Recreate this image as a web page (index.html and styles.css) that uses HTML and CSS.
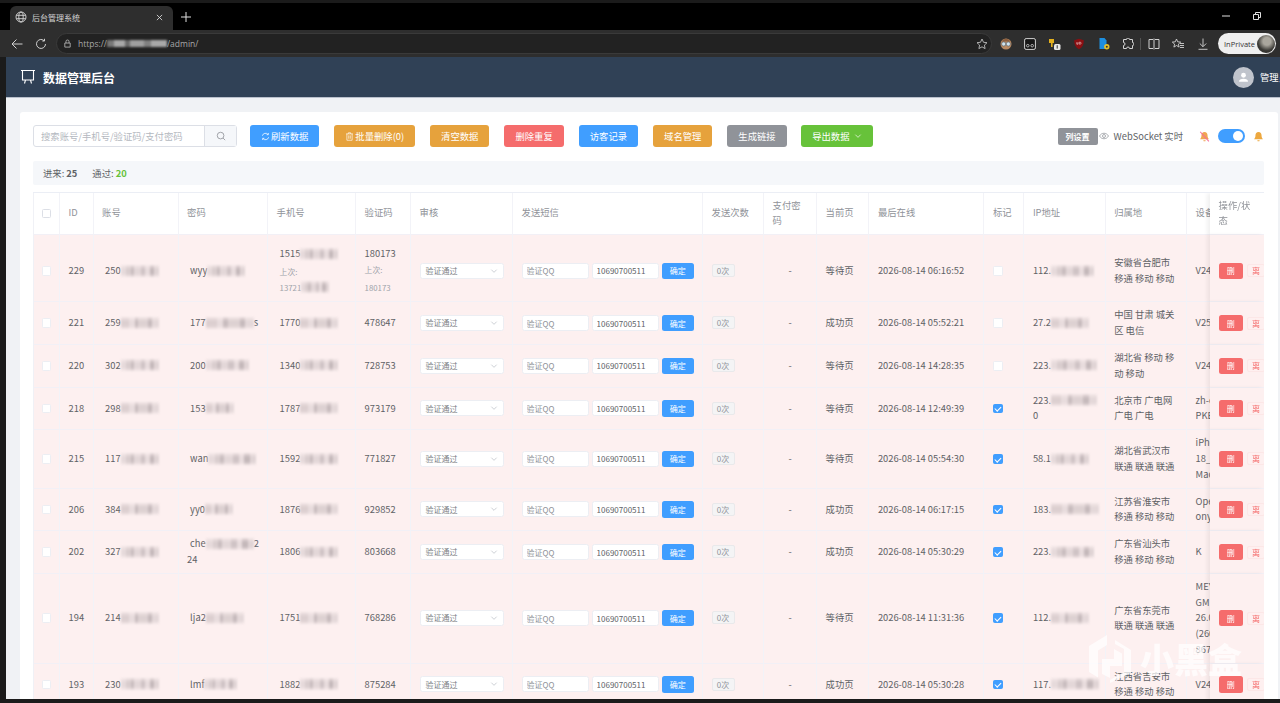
FILE: index.html
```html
<!DOCTYPE html>
<html lang="zh-CN">
<head>
  <meta charset="UTF-8" />
  <meta name="viewport" content="width=device-width, initial-scale=1.0"/>
  <title>后台管理系统</title>
  <link rel="stylesheet" href="styles.css">
</head>
<body>

  <!-- shared icons -->
  <svg class="defs" aria-hidden="true">
    <symbol id="i-down" viewBox="0 0 12 12"><path d="M2 4l4 4 4-4" fill="none" stroke="currentColor" stroke-width="1"/></symbol>
    <symbol id="i-bell" viewBox="0 0 12 12"><path d="M6 1c-2.2 0-3.3 1.700-3.300 3.600 0 2.400-.9 3.400-1.500 4.400h9.600c-.6-1-1.500-2-1.500-4.400C9.300 2.700 8.200 1 6 1zM4.700 10a1.300 1.300 0 0 0 2.600 0z" fill="currentColor"/></symbol>
  </svg>

  <!-- Browser frame -->
  <div class="tabstrip">
    <div class="tab">
      <svg class="tab-globe" viewBox="0 0 12 12"><g fill="none" stroke="#d6d6d6" stroke-width=".9"><circle cx="6" cy="6" r="5"/><ellipse cx="6" cy="6" rx="2.200" ry="5"/><path d="M1.300 4.300h9.400M1.300 7.700h9.400"/></g></svg>
      <span class="tab-title">后台管理系统</span>
      <svg class="tab-close" viewBox="0 0 8 8"><path d="M1 1l6 6M7 1L1 7" stroke="#d8d8d8" stroke-width="1"/></svg>
    </div>
    <svg class="tab-new" viewBox="0 0 10 10"><path d="M5 0v10M0 5h10" stroke="#e0e0e0" stroke-width="1"/></svg>
    <div class="win-btns">
      <svg class="win-min" viewBox="0 0 8 8"><path d="M0 4h8" stroke="#e0e0e0" stroke-width="1"/></svg>
      <svg class="win-max" viewBox="0 0 8 8"><path d="M.5 2.500h5v5h-5zM2.500 2.500v-2h5v5h-2" fill="none" stroke="#e0e0e0" stroke-width="1"/></svg>
    </div>
  </div>

  <div class="navbar">
    <svg class="nav-ico" viewBox="0 0 12 12"><path d="M11.500 6H1M5.500 1.500L1 6l4.500 4.500" fill="none" stroke="#cfcfcf" stroke-width="1"/></svg>
    <svg class="nav-ico nav-reload" viewBox="0 0 12 12"><path d="M10.500 6a4.500 4.500 0 1 1-1.400-3.300M9.500 .8v2.200H7.300" fill="none" stroke="#cfcfcf" stroke-width="1"/></svg>
    <div class="address">
      <svg class="lock" viewBox="0 0 10 10"><path d="M2 4.500h6v4.500H2zM3.300 4.500V2.800a1.700 1.700 0 0 1 3.400 0v1.700" fill="none" stroke="#bdbdbd" stroke-width=".9"/></svg>
      <span class="url">https://</span><span class="url-mosaic"></span><span class="url">/admin/</span>
      <svg class="addr-star" viewBox="0 0 12 12"><path d="M6 1l1.500 3.300 3.500.4-2.600 2.400.7 3.500L6 8.800l-3.100 1.800.7-3.500L1 4.700l3.500-.4z" fill="none" stroke="#bdbdbd" stroke-width=".9"/></svg>
    </div>
    <div class="ext-icons">
      <svg class="ext" viewBox="0 0 12 12"><circle cx="6" cy="6" r="5.500" fill="#b98a62"/><path d="M1.500 3.500a5 5 0 0 1 9 0z" fill="#8c5f3f"/><circle cx="3.700" cy="6" r="2.100" fill="#cfe3ee" stroke="#50606c" stroke-width=".6"/><circle cx="8.300" cy="6" r="2.100" fill="#cfe3ee" stroke="#50606c" stroke-width=".6"/></svg>
      <svg class="ext" viewBox="0 0 12 12"><rect x=".6" y=".6" width="10.800" height="10.800" rx="1.500" fill="#161616" stroke="#e6e6e6" stroke-width=".9"/><circle cx="3.800" cy="7.700" r="1.300" fill="none" stroke="#e6e6e6" stroke-width=".7"/><circle cx="8.200" cy="7.700" r="1.300" fill="none" stroke="#e6e6e6" stroke-width=".7"/></svg>
      <svg class="ext" viewBox="0 0 12 12"><path d="M0 1h5v4H3.600v4H2V5H0z" fill="#e3b01d"/><rect x="5" y="6" width="6.500" height="6" rx="1.500" fill="#e8e8e8"/><path d="M8.200 7.200v3.400" stroke="#333" stroke-width="1"/></svg>
      <svg class="ext" viewBox="0 0 12 12"><path d="M6 .8l4.800 1.400c0 4.300-1.300 7.300-4.800 9-3.500-1.700-4.800-4.700-4.800-9z" fill="#8a0f12"/><path d="M3.800 4.200v2h1.200v-2M6.300 4.200v2h.8a1 1 0 0 0 0-2z" fill="none" stroke="#f2d0d0" stroke-width=".6"/></svg>
      <svg class="ext" viewBox="0 0 12 12"><path d="M1.500 0h5l2 2.500V11h-7z" fill="#1d8fe0"/><circle cx="8.800" cy="8.800" r="2.700" fill="#e6c229"/><circle cx="8.800" cy="8.800" r="1" fill="#333"/></svg>
      <svg class="ext" viewBox="0 0 12 12"><path d="M4.500 1.500a1.500 1.500 0 0 1 3 0h3v3a1.500 1.500 0 0 1 0 3v3h-3a1.500 1.500 0 0 0-3 0h-3v-3a1.500 1.500 0 0 0 0-3v-3z" fill="none" stroke="#d2d2d2" stroke-width="1"/></svg>
      <span class="ext-sep"></span>
      <svg class="ext" viewBox="0 0 12 12"><path d="M5 1.500H1v9h4M7 1.500h4v9H7M6 .5v11" fill="none" stroke="#d2d2d2" stroke-width="1"/></svg>
      <svg class="ext" viewBox="0 0 12 12"><path d="M4.500 1l1.200 2.800 3 .3-2.300 2 .7 3-2.600-1.600L1.900 9.100l.7-3-2.300-2 3-.3zM8 5.500h4M8 7.500h4M8 9.500h4" fill="none" stroke="#d2d2d2" stroke-width=".9"/></svg>
      <svg class="ext" viewBox="0 0 12 12"><path d="M6 .5v8M2.800 5.500L6 8.700l3.200-3.200M1.500 11.300h9" fill="none" stroke="#d2d2d2" stroke-width=".9"/></svg>
    </div>
    <div class="inprivate">
      <span>InPrivate</span>
      <span class="inprivate-pic"></span>
    </div>
  </div>

  <!-- Page -->
  <div class="viewport">
    <div class="header">
      <svg class="logo" viewBox="0 0 16 16"><path d="M1 1.500h14M2.500 1.500v9.500h11V1.500M5.500 11l-1 3.500M10.500 11l1 3.500" fill="none" stroke="#fff" stroke-width="1.100"/></svg>
      <h1>数据管理后台</h1>
      <div class="user">
        <span class="avatar">
          <svg viewBox="0 0 20 20"><circle cx="10" cy="7" r="3.200" fill="#fff"/><path d="M4 15.500c0-2.500 2.500-3.700 6-3.700s6 1.200 6 3.700z" fill="#fff"/></svg>
        </span>
        <span class="user-name">管理员</span>
      </div>
    </div>

    <main>
      <div class="card">

        <div class="toolbar">
          <div class="search">
            <input type="text" placeholder="搜索账号/手机号/验证码/支付密码">
            <span class="search-btn">
              <svg viewBox="0 0 12 12"><circle cx="5.500" cy="5.500" r="4" fill="none" stroke="#909399" stroke-width="1"/><path d="M8.500 8.500l2.500 2.500" stroke="#909399" stroke-width="1"/></svg>
            </span>
          </div>
          <button class="btn btn-primary">
            <svg class="btn-ico" viewBox="0 0 12 12"><path d="M1.800 5a4.300 4.300 0 0 1 7.600-1.600M10.200 7a4.300 4.300 0 0 1-7.600 1.600M9.800 1.300v2.300H7.500M2.200 10.700V8.400h2.300" fill="none" stroke="#fff" stroke-width="1"/></svg>刷新数据
          </button>
          <button class="btn btn-warning">
            <svg class="btn-ico" viewBox="0 0 12 12"><path d="M1.500 2.500h9M4.500 2.500V1h3v1.500M2.500 2.500V11h7V2.500M5 4.500v4.500M7 4.500v4.500" fill="none" stroke="#fff" stroke-width=".9"/></svg>批量删除(0)
          </button>
          <button class="btn btn-warning">清空数据</button>
          <button class="btn btn-danger">删除重复</button>
          <button class="btn btn-primary">访客记录</button>
          <button class="btn btn-warning">域名管理</button>
          <button class="btn btn-info">生成链接</button>
          <button class="btn btn-success">导出数据<svg class="btn-arrow"><use href="#i-down"/></svg></button>

          <div class="toolbar-right">
            <button class="btn-columns">列设置</button>
            <svg class="eye" viewBox="0 0 12 12"><path d="M.6 6C2 3.700 3.800 2.700 6 2.700S10 3.700 11.400 6C10 8.300 8.200 9.300 6 9.300S2 8.300.6 6z" fill="none" stroke="#909399" stroke-width=".9"/><circle cx="6" cy="6" r="1.800" fill="none" stroke="#909399" stroke-width=".9"/></svg>
            <span class="ws-label">WebSocket 实时</span>
            <span class="bell-off">
              <svg><use href="#i-bell"/></svg>
            </span>
            <span class="switch"></span>
            <svg class="bell-on"><use href="#i-bell"/></svg>
          </div>
        </div>

        <div class="stats">
          <span>进来: <b>25</b></span>
          <span>通过: <b class="green">20</b></span>
        </div>

        <div class="table-wrap">
          <table class="data-table">
            <colgroup>
              <col class="c-check"><col class="c-id"><col class="c-account"><col class="c-pwd"><col class="c-phone"><col class="c-code"><col class="c-audit"><col class="c-sms"><col class="c-count"><col class="c-pay"><col class="c-page"><col class="c-time"><col class="c-mark"><col class="c-ip"><col class="c-area"><col class="c-device"><col class="c-ops">
            </colgroup>
            <thead>
              <tr>
                <th><span class="check"></span></th>
                <th>ID</th><th>账号</th><th>密码</th><th>手机号</th><th>验证码</th><th>审核</th><th>发送短信</th><th>发送次数</th><th>支付密码</th><th>当前页</th><th>最后在线</th><th>标记</th><th>IP地址</th><th>归属地</th><th>设备</th>
                <th class="fixed">操作/状态</th>
              </tr>
            </thead>
            <tbody>
              <tr class="row-first">
                <td><span class="check"></span></td>
                <td>229</td>
                <td><span class="val">250<i class="mosaic m38"></i></span></td>
                <td><span class="val">wyy<i class="mosaic m38"></i></span></td>
                <td><span class="val">1515<i class="mosaic m38"></i></span><span class="sub val">上次:</span><span class="sub val">13721<i class="mosaic m28"></i></span></td>
                <td>180173<span class="sub">上次:</span><span class="sub">180173</span></td>
                <td><div class="select">验证通过<svg><use href="#i-down"/></svg></div></td>
                <td><div class="sms"><input type="text" placeholder="验证QQ"><input type="text" value="10690700511"><button class="btn-ok">确定</button></div></td>
                <td><span class="tag-count">0次</span></td>
                <td class="center">-</td>
                <td>等待页</td>
                <td>2026-08-14 06:16:52</td>
                <td><span class="check"></span></td>
                <td class="ip">112.<i class="mosaic m43"></i></td>
                <td>安徽省合肥市 移通 移动 移动</td>
                <td>V24</td>
                <td class="fixed"><div class="ops"><button class="btn-del">删</button><span class="tag-off">离</span></div></td>
              </tr>
              <tr>
                <td><span class="check"></span></td>
                <td>221</td>
                <td><span class="val">259<i class="mosaic m38"></i></span></td>
                <td><span class="val">177<i class="mosaic m48"></i>s</span></td>
                <td><span class="val">1770<i class="mosaic m38"></i></span></td>
                <td>478647</td>
                <td><div class="select">验证通过<svg><use href="#i-down"/></svg></div></td>
                <td><div class="sms"><input type="text" placeholder="验证QQ"><input type="text" value="10690700511"><button class="btn-ok">确定</button></div></td>
                <td><span class="tag-count">0次</span></td>
                <td class="center">-</td>
                <td>成功页</td>
                <td>2026-08-14 05:52:21</td>
                <td><span class="check"></span></td>
                <td class="ip">27.2<i class="mosaic m38"></i></td>
                <td>中国 甘肃 城关区 电信</td>
                <td>V25</td>
                <td class="fixed"><div class="ops"><button class="btn-del">删</button><span class="tag-off">离</span></div></td>
              </tr>
              <tr>
                <td><span class="check"></span></td>
                <td>220</td>
                <td><span class="val">302<i class="mosaic m38"></i></span></td>
                <td><span class="val">200<i class="mosaic m43"></i></span></td>
                <td><span class="val">1340<i class="mosaic m38"></i></span></td>
                <td>728753</td>
                <td><div class="select">验证通过<svg><use href="#i-down"/></svg></div></td>
                <td><div class="sms"><input type="text" placeholder="验证QQ"><input type="text" value="10690700511"><button class="btn-ok">确定</button></div></td>
                <td><span class="tag-count">0次</span></td>
                <td class="center">-</td>
                <td>等待页</td>
                <td>2026-08-14 14:28:35</td>
                <td><span class="check"></span></td>
                <td class="ip">223.<i class="mosaic m46"></i></td>
                <td>湖北省 移动 移动 移动</td>
                <td>V24</td>
                <td class="fixed"><div class="ops"><button class="btn-del">删</button><span class="tag-off">离</span></div></td>
              </tr>
              <tr>
                <td><span class="check"></span></td>
                <td>218</td>
                <td><span class="val">298<i class="mosaic m38"></i></span></td>
                <td><span class="val">153<i class="mosaic m28"></i></span></td>
                <td><span class="val">1787<i class="mosaic m38"></i></span></td>
                <td>973179</td>
                <td><div class="select">验证通过<svg><use href="#i-down"/></svg></div></td>
                <td><div class="sms"><input type="text" placeholder="验证QQ"><input type="text" value="10690700511"><button class="btn-ok">确定</button></div></td>
                <td><span class="tag-count">0次</span></td>
                <td class="center">-</td>
                <td>等待页</td>
                <td>2026-08-14 12:49:39</td>
                <td><span class="check on"></span></td>
                <td class="ip">223.<i class="mosaic m46"></i><br>0</td>
                <td>北京市 广电网 广电 广电</td>
                <td>zh-cn<br>PKE</td>
                <td class="fixed"><div class="ops"><button class="btn-del">删</button><span class="tag-off">离</span></div></td>
              </tr>
              <tr>
                <td><span class="check"></span></td>
                <td>215</td>
                <td><span class="val">117<i class="mosaic m38"></i></span></td>
                <td><span class="val">wan<i class="mosaic m48"></i></span></td>
                <td><span class="val">1592<i class="mosaic m38"></i></span></td>
                <td>771827</td>
                <td><div class="select">验证通过<svg><use href="#i-down"/></svg></div></td>
                <td><div class="sms"><input type="text" placeholder="验证QQ"><input type="text" value="10690700511"><button class="btn-ok">确定</button></div></td>
                <td><span class="tag-count">0次</span></td>
                <td class="center">-</td>
                <td>等待页</td>
                <td>2026-08-14 05:54:30</td>
                <td><span class="check on"></span></td>
                <td class="ip">58.1<i class="mosaic m38"></i></td>
                <td>湖北省武汉市 联通 联通 联通</td>
                <td>iPhone<br>18_5<br>Mac</td>
                <td class="fixed"><div class="ops"><button class="btn-del">删</button><span class="tag-off">离</span></div></td>
              </tr>
              <tr>
                <td><span class="check"></span></td>
                <td>206</td>
                <td><span class="val">384<i class="mosaic m38"></i></span></td>
                <td><span class="val">yy0<i class="mosaic m28"></i></span></td>
                <td><span class="val">1876<i class="mosaic m38"></i></span></td>
                <td>929852</td>
                <td><div class="select">验证通过<svg><use href="#i-down"/></svg></div></td>
                <td><div class="sms"><input type="text" placeholder="验证QQ"><input type="text" value="10690700511"><button class="btn-ok">确定</button></div></td>
                <td><span class="tag-count">0次</span></td>
                <td class="center">-</td>
                <td>成功页</td>
                <td>2026-08-14 06:17:15</td>
                <td><span class="check on"></span></td>
                <td class="ip">183.<i class="mosaic m48"></i></td>
                <td>江苏省淮安市 移通 移动 移动</td>
                <td>Open<br>ony</td>
                <td class="fixed"><div class="ops"><button class="btn-del">删</button><span class="tag-off">离</span></div></td>
              </tr>
              <tr>
                <td><span class="check"></span></td>
                <td>202</td>
                <td><span class="val">327<i class="mosaic m38"></i></span></td>
                <td><span class="val">che<i class="mosaic m48"></i>2<br>24</span></td>
                <td><span class="val">1806<i class="mosaic m38"></i></span></td>
                <td>803668</td>
                <td><div class="select">验证通过<svg><use href="#i-down"/></svg></div></td>
                <td><div class="sms"><input type="text" placeholder="验证QQ"><input type="text" value="10690700511"><button class="btn-ok">确定</button></div></td>
                <td><span class="tag-count">0次</span></td>
                <td class="center">-</td>
                <td>成功页</td>
                <td>2026-08-14 05:30:29</td>
                <td><span class="check on"></span></td>
                <td class="ip">223.<i class="mosaic m43"></i></td>
                <td>广东省汕头市 移通 移动 移动</td>
                <td>K</td>
                <td class="fixed"><div class="ops"><button class="btn-del">删</button><span class="tag-off">离</span></div></td>
              </tr>
              <tr>
                <td><span class="check"></span></td>
                <td>194</td>
                <td><span class="val">214<i class="mosaic m38"></i></span></td>
                <td><span class="val">lja2<i class="mosaic m38"></i></span></td>
                <td><span class="val">1751<i class="mosaic m38"></i></span></td>
                <td>768286</td>
                <td><div class="select">验证通过<svg><use href="#i-down"/></svg></div></td>
                <td><div class="sms"><input type="text" placeholder="验证QQ"><input type="text" value="10690700511"><button class="btn-ok">确定</button></div></td>
                <td><span class="tag-count">0次</span></td>
                <td class="center">-</td>
                <td>等待页</td>
                <td>2026-08-14 11:31:36</td>
                <td><span class="check on"></span></td>
                <td class="ip">112.<i class="mosaic m38"></i></td>
                <td>广东省东莞市 联通 联通 联通</td>
                <td>MEY<br>GM<br>26.0<br>(260<br>867</td>
                <td class="fixed"><div class="ops"><button class="btn-del">删</button><span class="tag-off">离</span></div></td>
              </tr>
              <tr>
                <td><span class="check"></span></td>
                <td>193</td>
                <td><span class="val">230<i class="mosaic m38"></i></span></td>
                <td><span class="val">lmf<i class="mosaic m33"></i></span></td>
                <td><span class="val">1882<i class="mosaic m38"></i></span></td>
                <td>875284</td>
                <td><div class="select">验证通过<svg><use href="#i-down"/></svg></div></td>
                <td><div class="sms"><input type="text" placeholder="验证QQ"><input type="text" value="10690700511"><button class="btn-ok">确定</button></div></td>
                <td><span class="tag-count">0次</span></td>
                <td class="center">-</td>
                <td>成功页</td>
                <td>2026-08-14 05:30:28</td>
                <td><span class="check on"></span></td>
                <td class="ip">117.<i class="mosaic m48"></i></td>
                <td>江西省吉安市 移通 移动 移动</td>
                <td>V24</td>
                <td class="fixed"><div class="ops"><button class="btn-del">删</button><span class="tag-off">离</span></div></td>
              </tr>
            </tbody>
          </table>
        </div>

      </div>
    </main>

    <!-- site watermark on the screenshot -->
    <div class="watermark">
      <svg viewBox="0 0 42 48"><path d="M18 0L0 11v26l9 5.500V15.500L18 10zM13 24h12V14l8 4.500V31H21v12l-8-4zM26 5l16 10v23L21 48v-3l14-8V14L26 9z" fill="currentColor"/></svg>
      <span>小黑盒</span>
    </div>
  </div>

</body>
</html>
```

FILE: styles.css
```css
* {
  box-sizing: border-box;
}

html, body {
  height: 100%;
}

body {
  margin: 0;
  display: flex;
  flex-direction: column;
  height: 703px;
  overflow: hidden;
  background: #1b1b1b;
  font-family: "Noto Sans CJK SC", "Noto Sans", sans-serif;
  font-size: 9.33px;
  color: #606266;
}

.defs {
  position: absolute;
  width: 0;
  height: 0;
}

input, button {
  font-family: inherit;
}

/* Browser frame */
.tabstrip {
  display: flex;
  align-items: flex-end;
  height: 27px;
  margin-top: 3px;
  flex-shrink: 0;
  padding-left: 10px;
  background: #000;
}

.tab {
  position: relative;
  display: flex;
  align-items: center;
  width: 163px;
  height: 24px;
  padding: 0 7px 2px 5px;
  background: #2e2e2e;
  border-radius: 6px 6px 0 0;
}

.tab-globe {
  width: 12px;
  height: 12px;
}

.tab-title {
  margin-left: 5px;
  font-size: 8px;
  color: #d4d4d4;
}

.tab-close {
  width: 7px;
  height: 7px;
  margin-left: auto;
  margin-right: 3px;
}

.tab-new {
  width: 10px;
  height: 10px;
  margin: 0 0 8px 8px;
}

.win-btns {
  display: flex;
  align-items: center;
  gap: 23px;
  margin-left: auto;
  margin-bottom: 10px;
  padding-right: 19px;
}

.win-btns svg {
  width: 8px;
  height: 8px;
}

.navbar {
  display: flex;
  align-items: center;
  height: 27px;
  flex-shrink: 0;
  padding-left: 11px;
  background: #2e2e2e;
}

.nav-ico {
  width: 12px;
  height: 12px;
}

.nav-reload {
  margin-left: 12px;
}

.address {
  display: flex;
  align-items: center;
  width: 936px;
  height: 21px;
  margin-left: 9px;
  padding-left: 6px;
  background: #222;
  border: 1px solid #3a3a3a;
  border-radius: 11px;
}

.lock {
  width: 9px;
  height: 9px;
  margin-right: 6px;
}

.url {
  font-family: "Open Sans", sans-serif;
  font-size: 8.5px;
  color: #a8a8a8;
}

.url-mosaic {
  width: 60px;
  height: 7px;
  background: linear-gradient(90deg, #777 0 12%, #a8a8a8 12% 30%, #6a6a6a 30% 38%, #a0a0a0 38% 62%, #808080 62% 74%, #a8a8a8 74% 100%);
  filter: blur(1px);
}

.addr-star {
  width: 12px;
  height: 12px;
  margin-left: auto;
  margin-right: 3px;
}

.ext-icons {
  display: flex;
  align-items: center;
  gap: 12.4px;
  margin-left: 8px;
}

.ext {
  width: 12px;
  height: 12px;
}

.ext-sep {
  width: 1px;
  height: 12px;
  margin: 0 -6px;
  background: #555;
}

.inprivate {
  display: flex;
  align-items: center;
  justify-content: space-between;
  width: 58px;
  height: 21px;
  margin-left: 9.5px;
  padding: 0 1px 0 6px;
  background: #efefef;
  border-radius: 11px;
  font-family: "Open Sans", sans-serif;
  font-size: 7.5px;
  color: #333;
}

.inprivate-pic {
  width: 18px;
  height: 18px;
  border-radius: 50%;
  background: radial-gradient(circle at 55% 35%, #a9a69d 0 25%, #3b3a36 60%, #22211f);
}

/* Page */
.viewport {
  position: relative;
  flex: 1;
  margin: 0 0 4px 6px;
  min-height: 0;
  display: flex;
  flex-direction: column;
  overflow: hidden;
  background: #f0f2f5;
}

.header {
  display: flex;
  align-items: center;
  height: 41px;
  flex-shrink: 0;
  padding-left: 14px;
  background: #304156;
  border-bottom: 1px solid #b9c0cc;
  color: #fff;
}

.logo {
  width: 16px;
  height: 16px;
}

.header h1 {
  margin: 0 0 0 7px;
  font-size: 12px;
  font-weight: 700;
}

.user {
  display: flex;
  align-items: center;
  margin-left: auto;
  margin-right: -8px;
}

.avatar {
  display: flex;
  align-items: center;
  justify-content: center;
  width: 21px;
  height: 21px;
  border-radius: 50%;
  background: #c0c4cc;
}

.avatar svg {
  width: 15px;
  height: 15px;
}

.user-name {
  margin-left: 6px;
  font-size: 9.33px;
}

main {
  flex: 1;
  min-height: 0;
  padding: 14px 2px 0 14px;
}

.card {
  height: 100%;
  padding: 13px 14px 0 13px;
  background: #fff;
  border-radius: 3px 3px 0 0;
}

/* Toolbar */
.toolbar {
  display: flex;
  align-items: center;
  height: 22px;
  margin-bottom: 14px;
}

.search {
  display: flex;
  width: 204px;
  height: 22px;
  margin-right: 13px;
  border: 1px solid #dcdfe6;
  border-radius: 3px;
}

.search input {
  flex: 1;
  min-width: 0;
  padding: 0 7px;
  border: 0;
  outline: 0;
  background: transparent;
  font-size: 9.33px;
}

.search input::placeholder {
  color: #b4b8c0;
}

.search-btn {
  display: flex;
  align-items: center;
  justify-content: center;
  width: 32px;
  background: #f5f7fa;
  border-left: 1px solid #dcdfe6;
}

.search-btn svg {
  width: 10px;
  height: 10px;
}

.btn {
  display: flex;
  align-items: center;
  height: 22px;
  margin-right: 15px;
  padding: 0 11px;
  border: 0;
  border-radius: 3px;
  font-size: 9.33px;
  color: #fff;
}

.btn-primary { background: #409eff; }
.btn-warning { background: #e6a23c; }
.btn-danger  { background: #f56c6c; }
.btn-info    { background: #909399; margin-right: 14.5px; }
.btn-success { background: #67c23a; }

.btn-ico {
  width: 9px;
  height: 9px;
  margin-right: 1px;
}

.btn-arrow {
  width: 8px;
  height: 8px;
  margin-left: 5px;
}

.toolbar-right {
  display: flex;
  align-items: center;
  margin-left: auto;
}

.btn-columns {
  height: 17px;
  width: 40px;
  padding: 0;
  border: 0;
  border-radius: 2px;
  background: #909399;
  color: #fff;
  font-size: 8px;
  font-weight: 700;
}

.eye {
  width: 10px;
  height: 10px;
  margin-left: 1px;
}

.ws-label {
  margin-left: 5px;
  color: #606266;
}

.bell-off {
  position: relative;
  width: 11px;
  height: 11px;
  margin-left: 16px;
  color: #f0a552;
}

.bell-off svg {
  display: block;
  width: 11px;
  height: 11px;
}

.bell-off::after {
  content: "";
  position: absolute;
  left: 5px;
  top: -1px;
  width: 1.200px;
  height: 13px;
  background: #f56c9c;
  transform: rotate(-42deg);
}

.switch {
  position: relative;
  width: 27px;
  height: 14px;
  margin-left: 8px;
  border-radius: 7px;
  background: #409eff;
}

.switch::after {
  content: "";
  position: absolute;
  right: 2px;
  top: 2px;
  width: 10px;
  height: 10px;
  border-radius: 50%;
  background: #fff;
}

.bell-on {
  width: 11px;
  height: 11px;
  margin-left: 8px;
  color: #eda83f;
}

.stats {
  display: flex;
  align-items: center;
  gap: 15px;
  height: 24px;
  margin-bottom: 7px;
  padding-left: 10px;
  background: #f5f7fa;
  border-radius: 2px;
}

.stats b {
  font-weight: 700;
}

.stats .green {
  color: #67c23a;
}

/* Table */
.table-wrap {
  overflow: hidden;
  width: 1231px;
  height: 520px;
  border-top: 1px solid #ebeef5;
}

.data-table {
  table-layout: fixed;
  width: 1285px;
  border-collapse: separate;
  border-spacing: 0;
  line-height: 15.67px;
}

.c-check  { width: 27px; }
.c-id     { width: 33.5px; }
.c-account { width: 85px; }
.c-pwd    { width: 89.5px; }
.c-phone  { width: 88px; }
.c-code   { width: 55px; }
.c-audit  { width: 102px; }
.c-sms    { width: 190px; }
.c-count  { width: 61px; }
.c-pay    { width: 53px; }
.c-page   { width: 52.3px; }
.c-time   { width: 115px; }
.c-mark   { width: 40px; }
.c-ip     { width: 81.3px; }
.c-area   { width: 81.4px; }
.c-device { width: 77px; }
.c-ops    { width: 54px; }

.data-table th,
.data-table td {
  padding: 5.17px 8.6px;
  border-right: 1px solid #f2f3f8;
  border-bottom: 1px solid #f2f0f6;
  text-align: left;
  vertical-align: middle;
}

.data-table th {
  padding-top: 4.67px;
  padding-bottom: 4.67px;
  background: #fff;
  color: #909399;
  font-weight: 400;
}

.data-table td {
  background: #fdf0f0;
}

.data-table th:first-child,
.data-table td:first-child {
  border-left: 1px solid #f0f1f6;
  padding: 0 0 0 7.5px;
}

.data-table .row-first td {
  padding-top: 11.8px;
  padding-bottom: 5.8px;
}

.data-table .center {
  text-align: center;
}

.data-table .fixed {
  position: sticky;
  right: 0;
  z-index: 2;
  overflow: hidden;
  border-right: 0;
  box-shadow: -3px 0 4px rgba(0, 0, 0, 0.06);
}

.data-table td.fixed {
  padding-right: 0;
}

.val {
  padding-left: 3px;
  white-space: nowrap;
}

.sub {
  display: block;
  font-size: 7.8px;
  color: #a0a3aa;
}

.row-first .sub:nth-child(2) {
  margin-top: 2px;
}

.ip {
  white-space: nowrap;
}

.mosaic {
  display: inline-block;
  height: 12px;
  vertical-align: -2.5px;
  background:
    linear-gradient(180deg, rgba(253, 240, 240, 0.7), rgba(253, 240, 240, 0) 35%, rgba(253, 240, 240, 0) 70%, rgba(253, 240, 240, 0.7)),
    linear-gradient(90deg, #e6dadb 0 14%, #d9cdce 14% 26%, #c9bdbf 26% 34%, #e3d7d8 34% 52%, #cfc3c5 52% 64%, #e8dcdd 64% 76%, #c4b8ba 76% 88%, #e0d4d5 88% 100%);
  filter: blur(1.2px);
}

tr:nth-child(even) .mosaic {
  background:
    linear-gradient(180deg, rgba(253, 240, 240, 0.7), rgba(253, 240, 240, 0) 35%, rgba(253, 240, 240, 0) 70%, rgba(253, 240, 240, 0.7)),
    linear-gradient(90deg, #dccfd0 0 22%, #e8dcdd 22% 36%, #c8bcbe 36% 46%, #ddd1d2 46% 70%, #c6babc 70% 82%, #e4d8d9 82% 100%);
}

.m28 { width: 28px; }
.m33 { width: 33px; }
.m38 { width: 38px; }
.m43 { width: 43px; }
.m46 { width: 46px; }
.m48 { width: 48px; }

.check {
  position: relative;
  display: block;
  width: 9.67px;
  height: 9.67px;
  background: #fff;
  border: 1px solid #eceef3;
  border-radius: 1.5px;
}

th .check {
  border-color: #dcdfe6;
}

.check.on {
  background: #409eff;
  border-color: #409eff;
}

.check.on::after {
  content: "";
  position: absolute;
  left: 2.500px;
  top: 0.500px;
  width: 2.600px;
  height: 5px;
  border: solid #fff;
  border-width: 0 1px 1px 0;
  transform: rotate(45deg);
}

.select {
  display: flex;
  align-items: center;
  justify-content: space-between;
  width: 84.5px;
  height: 16px;
  padding: 0 5px;
  background: #fff;
  border: 1px solid #eceef3;
  border-radius: 2.5px;
  font-size: 8px;
  color: #7c7f85;
}

.select svg {
  width: 8px;
  height: 8px;
  color: #b4b8c0;
}

.sms {
  display: flex;
  align-items: center;
  gap: 3px;
}

.sms input {
  width: 67px;
  height: 16px;
  padding: 0 4px;
  background: #fff;
  border: 1px solid #eceef3;
  border-radius: 2.5px;
  outline: 0;
  font-size: 8px;
  color: #606266;
}

.sms input::placeholder {
  color: #8e9197;
}

.btn-ok {
  flex-shrink: 0;
  width: 32.5px;
  height: 16.5px;
  padding: 0;
  border: 0;
  border-radius: 2.5px;
  background: #409eff;
  color: #fff;
  font-size: 8px;
}

.tag-count {
  display: inline-block;
  width: 23px;
  height: 13px;
  background: #f4f4f5;
  border: 1px solid #e9e9eb;
  border-radius: 2px;
  color: #909399;
  font-size: 8px;
  line-height: 11px;
  text-align: center;
}

.ops {
  display: flex;
  align-items: center;
  gap: 4px;
  width: 50px;
  margin-left: 0;
}

.btn-del {
  flex-shrink: 0;
  width: 24.5px;
  height: 16.5px;
  padding: 0;
  border: 0;
  border-radius: 2.5px;
  background: #f56c6c;
  color: #fff;
  font-size: 8px;
}

.tag-off {
  flex-shrink: 0;
  width: 18px;
  height: 13px;
  background: #fef0f0;
  border: 1px solid #fce7e7;
  border-radius: 2px;
  color: #f56c6c;
  font-size: 8px;
  line-height: 11px;
  text-align: center;
}

/* watermark */
.watermark {
  position: absolute;
  left: 1083px;
  top: 578px;
  z-index: 5;
  display: flex;
  align-items: center;
  gap: 9px;
  color: rgba(255, 255, 255, 0.72);
  pointer-events: none;
}

.watermark svg {
  width: 42px;
  height: 48px;
}

.watermark span {
  font-size: 34px;
  font-weight: 900;
  line-height: 48px;
}
```
